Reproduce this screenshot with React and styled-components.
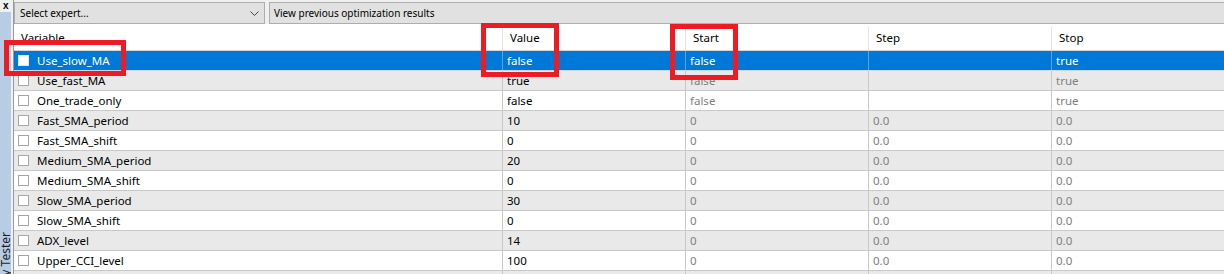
import React from 'react';
import styled, { createGlobalStyle } from 'styled-components';

const GlobalStyle = createGlobalStyle`
  html, body {
    margin: 0;
    padding: 0;
    background: #fff;
  }
  body {
    font-family: 'Noto Sans', 'Liberation Sans', sans-serif;
    font-size: 11.5px;
    color: #000;
  }
`;

const columns = ['Variable', 'Value', 'Start', 'Step', 'Stop'];

const rows = [
  ['Use_slow_MA', 'false', 'false', '', 'true'],
  ['Use_fast_MA', 'true', 'false', '', 'true'],
  ['One_trade_only', 'false', 'false', '', 'true'],
  ['Fast_SMA_period', '10', '0', '0.0', '0.0'],
  ['Fast_SMA_shift', '0', '0', '0.0', '0.0'],
  ['Medium_SMA_period', '20', '0', '0.0', '0.0'],
  ['Medium_SMA_shift', '0', '0', '0.0', '0.0'],
  ['Slow_SMA_period', '30', '0', '0.0', '0.0'],
  ['Slow_SMA_shift', '0', '0', '0.0', '0.0'],
  ['ADX_level', '14', '0', '0.0', '0.0'],
  ['Upper_CCI_level', '100', '0', '0.0', '0.0'],
  // only the top edge of this row is visible
  ['', '', '', '', ''],
];

// annotation boxes drawn over the grid
const marks = [
  { left: 4, top: 40, width: 122, height: 36 },
  { left: 481, top: 23, width: 78, height: 54 },
  { left: 670, top: 24, width: 68, height: 56 },
];

export default function App() {
  return (
    <>
      <GlobalStyle />
      <Page>
        <SideTab>
          <Close>x</Close>
          <SideBody>
            <SideLabel>Strategy Tester</SideLabel>
          </SideBody>
        </SideTab>
        <Main>
          <Toolbar>
            <Combo>
              <span>Select expert...</span>
              <svg width="9" height="6" viewBox="0 0 9 6">
                <polyline points="0.5,0.5 4.5,4.5 8.5,0.5" fill="none" stroke="#444" strokeWidth="1" />
              </svg>
            </Combo>
            <ToolButton>View previous optimization results</ToolButton>
          </Toolbar>
          <Grid>
            <HeaderRow>
              {columns.map((c, i) => (
                <HeadCell key={c} first={i === 0}>
                  {c}
                </HeadCell>
              ))}
            </HeaderRow>
            {rows.map((r, i) => (
              <Row key={i} selected={i === 0} odd={i % 2 === 1}>
                <NameCell>
                  <Check selected={i === 0} />
                  {r[0]}
                </NameCell>
                <Cell>{r[1]}</Cell>
                <Cell muted>{r[2]}</Cell>
                <Cell muted>{r[3]}</Cell>
                <Cell muted>{r[4]}</Cell>
              </Row>
            ))}
          </Grid>
        </Main>
        {marks.map((m, i) => (
          <Mark key={i} style={m} />
        ))}
      </Page>
    </>
  );
}

const Page = styled.div`
  position: relative;
  display: flex;
  width: 1224px;
  height: 274px;
  overflow: hidden;
`;

const SideTab = styled.div`
  width: 13px;
  flex: none;
  display: flex;
  flex-direction: column;
  background: #f0f0f0;
  border-right: 1px solid #9a9a9a;
`;

const Close = styled.div`
  height: 11px;
  padding: 1px 0 0 3px;
  font-family: 'Liberation Sans', sans-serif;
  font-weight: bold;
  font-size: 10px;
  line-height: 10px;
`;

const SideBody = styled.div`
  flex: 1;
  width: 11px;
  background: #b7cde5;
  padding-top: 220px;
  overflow: hidden;
`;

const SideLabel = styled.div`
  writing-mode: vertical-rl;
  transform: rotate(180deg);
  font-size: 12px;
  line-height: 11px;
  color: #1e1e1e;
  white-space: nowrap;
`;

const Main = styled.div`
  flex: 1;
  display: flex;
  flex-direction: column;
  min-width: 0;
  overflow: hidden;
`;

const Toolbar = styled.div`
  flex: none;
  display: flex;
  gap: 4px;
  height: 24px;
  padding-top: 2px;
  box-sizing: border-box;
  background: #f0f0f0;
  font-size: 10px;
`;

const Combo = styled.div`
  width: 251px;
  flex: none;
  display: flex;
  align-items: center;
  justify-content: space-between;
  box-sizing: border-box;
  padding: 0 5px;
  background: #e1e1e1;
  border: 1px solid #adadad;

  svg {
    margin-top: 1px;
  }
`;

const ToolButton = styled.div`
  flex: 1;
  display: flex;
  align-items: center;
  box-sizing: border-box;
  padding-left: 4px;
  background: #e1e1e1;
  border: 1px solid #adadad;
  border-right: none;
`;

const Grid = styled.div`
  flex: none;
  display: flex;
  flex-direction: column;
  padding-top: 3px;
  background: #fff;
`;

const rowColumns = '488px 183px 183px 183px 1fr';

const HeaderRow = styled.div`
  flex: none;
  display: grid;
  grid-template-columns: ${rowColumns};
  height: 24px;
  box-sizing: border-box;
  border-bottom: 1px solid #d5d5d5;
`;

const HeadCell = styled.div`
  padding-left: 7px;
  line-height: 22px;
  border-left: ${p => (p.first ? 'none' : '1px solid #e5e5e5')};
`;

const Row = styled.div`
  flex: none;
  display: grid;
  grid-template-columns: ${rowColumns};
  height: 20px;
  box-sizing: border-box;
  border-bottom: 1px solid ${p => (p.selected ? '#c9d7e6' : '#c8c8c8')};
  background: ${p => (p.selected ? '#0078d7' : p.odd ? '#e9e9e9' : '#fff')};
  color: ${p => (p.selected ? '#fff' : '#000')};
  --muted: ${p => (p.selected ? '#fff' : '#7f7f7f')};
  --sep: ${p => (p.selected ? '#5aa1e3' : '#c8c8c8')};
`;

const NameCell = styled.div`
  display: flex;
  align-items: center;
  gap: 8px;
  padding-left: 4px;
  line-height: 19px;
  white-space: nowrap;
`;

const Check = styled.span`
  width: 11px;
  height: 11px;
  flex: none;
  box-sizing: border-box;
  background: #fff;
  border: 1px solid ${p => (p.selected ? '#e6e6e6' : '#a6a6a6')};
`;

const Cell = styled.div`
  padding-left: 4px;
  line-height: 19px;
  white-space: nowrap;
  border-left: 1px solid var(--sep);
  color: ${p => (p.muted ? 'var(--muted)' : 'inherit')};
`;

const Mark = styled.div`
  position: absolute;
  box-sizing: border-box;
  border: 5px solid #ed1c24;
  pointer-events: none;
`;
